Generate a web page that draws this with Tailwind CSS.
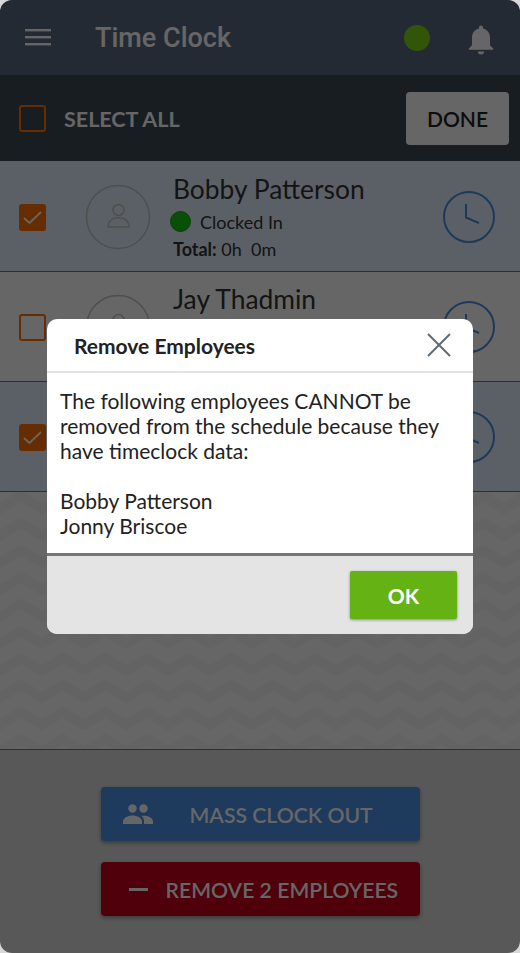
<!DOCTYPE html>
<html lang="en">
<head>
  <meta charset="UTF-8">
  <title>Time Clock</title>
  <script src="https://cdn.jsdelivr.net/npm/@tailwindcss/browser@4"></script>
</head>
<body class="bg-[#d8d8d8]">

  <div class="relative w-[520px] h-[953px] rounded-[12px] overflow-hidden flex flex-col bg-white font-['Lato',sans-serif] text-[#333]">

    <!-- Top bar -->
    <div class="h-[75px] shrink-0 bg-[#5a6980] flex items-center text-white">
      <svg class="ml-[25px] w-[26px] h-[18px]" viewBox="0 0 26 18" fill="#fff"><rect y="0" width="26" height="2.4"/><rect y="7" width="26" height="2.4"/><rect y="14" width="26" height="2.4"/></svg>
      <div class="ml-[44px] pt-[2px] font-['Roboto',sans-serif] font-medium text-[27px] leading-none">Time Clock</div>
      <div class="ml-auto w-[26px] h-[26px] rounded-full bg-[#7dd419]"></div>
      <svg class="ml-[37px] mr-[25px] mt-[5px] w-[28px] h-[32px]" viewBox="0 0 28 32" fill="#fff">
        <path d="M14 1.500c-1.200 0-2 .9-2 2v.9C7.600 5.400 5 9 5 13.400v7.800L1.800 24.600v1.200h24.400v-1.200L23 21.200v-7.800c0-4.400-2.600-8-7-9v-.9c0-1.100-.8-2-2-2z"/>
        <path d="M10.800 27.400h6.400c0 1.800-1.400 3.100-3.200 3.100s-3.200-1.300-3.200-3.100z"/>
      </svg>
    </div>

    <!-- Select all bar -->
    <div class="h-[86px] shrink-0 bg-[#3c4955] flex items-center pl-[19px] pr-[11px]">
      <div class="w-[27px] h-[27px] rounded-[3px] border-2 border-[#ff7000]"></div>
      <div class="ml-[18px] pt-[2px] text-white font-bold text-[21.500px]">SELECT ALL</div>
      <button class="ml-auto w-[103px] h-[53px] rounded-[4px] bg-white text-[#222] font-semibold text-[21px] pt-[1px]">DONE</button>
    </div>

    <!-- Employees -->
    <div class="h-[111px] shrink-0 pt-px bg-[#e4f0ff] border-b border-[#777] flex items-center relative">
      <div class="ml-[19px] mt-[1px] w-[27px] h-[27px] rounded-[3px] bg-[#ff7000] flex items-center justify-center">
        <svg class="w-[19px] h-[15px]" viewBox="0 0 19 15" fill="none" stroke="#fff" stroke-width="1.800"><path d="M1 8l5.500 5L18 2"/></svg>
      </div>
      <svg class="ml-[39px] w-[66px] h-[66px] shrink-0" viewBox="0 0 66 66" fill="none" stroke="#c4c4c4" stroke-width="1.500"><circle cx="33" cy="33" r="31.500"/><circle cx="33.500" cy="26" r="5.500"/><path d="M23 43c0-6 4.500-9.500 10.500-9.500S44 37 44 43z"/></svg>
      <div class="ml-[22px] pt-[1px] flex flex-col">
        <div class="text-[26.400px] leading-[36px]">Bobby Patterson</div>
        <div class="flex items-center h-[29px] text-[18px] -ml-[3px]">
          <span class="w-[21px] h-[21px] rounded-full bg-[#14c814] border border-[#0fa00f]"></span>
          <span class="ml-[9px] pt-[1px]">Clocked In</span>
        </div>
        <div class="text-[18px] leading-[27px]"><b>Total:</b> 0h&nbsp; 0m</div>
      </div>
      <svg class="ml-auto mr-[25px] w-[52px] h-[52px]" viewBox="0 0 52 52" fill="none" stroke="#4a90e2" stroke-width="2"><circle cx="26" cy="26" r="25"/><path d="M23 13v13.500L36 32"/></svg>
    </div>

    <!-- status lines of the other two rows sit behind the dialog, so they are left out -->
    <div class="h-[110px] shrink-0 bg-white border-b border-[#777] flex items-center relative">
      <div class="ml-[19px] mt-[1px] w-[27px] h-[27px] rounded-[3px] border-2 border-[#ff7000]"></div>
      <svg class="ml-[39px] w-[66px] h-[66px] shrink-0" viewBox="0 0 66 66" fill="none" stroke="#c4c4c4" stroke-width="1.500"><circle cx="33" cy="33" r="31.500"/><circle cx="33.500" cy="26" r="5.500"/><path d="M23 43c0-6 4.500-9.500 10.500-9.500S44 37 44 43z"/></svg>
      <div class="ml-[22px] pt-[1px] pb-[56px] flex flex-col">
        <div class="text-[26.400px] leading-[34px]">Jay Thadmin</div>
      </div>
      <svg class="ml-auto mr-[25px] w-[52px] h-[52px]" viewBox="0 0 52 52" fill="none" stroke="#4a90e2" stroke-width="2"><circle cx="26" cy="26" r="25"/><path d="M23 13v13.500L36 32"/></svg>
    </div>

    <div class="h-[110px] shrink-0 bg-[#e4f0ff] border-b border-[#777] flex items-center relative">
      <div class="ml-[19px] mt-[1px] w-[27px] h-[27px] rounded-[3px] bg-[#ff7000] flex items-center justify-center">
        <svg class="w-[19px] h-[15px]" viewBox="0 0 19 15" fill="none" stroke="#fff" stroke-width="1.800"><path d="M1 8l5.500 5L18 2"/></svg>
      </div>
      <svg class="ml-auto mr-[25px] w-[52px] h-[52px]" viewBox="0 0 52 52" fill="none" stroke="#4a90e2" stroke-width="2"><circle cx="26" cy="26" r="25"/><path d="M23 13v13.500L36 32"/></svg>
    </div>

    <!-- Empty list background with zigzag -->
    <div class="flex-1 bg-white border-b border-[#777] overflow-hidden">
      <svg class="w-full h-full" fill="none">
        <defs>
          <pattern id="zigzag" width="42" height="27" patternUnits="userSpaceOnUse">
            <path d="M-2 18L21 4L44 18" stroke="#f8f8f8" stroke-width="10"/>
            <path d="M-2 45L21 31L44 45" stroke="#f8f8f8" stroke-width="10"/>
          </pattern>
        </defs>
        <rect width="100%" height="100%" fill="url(#zigzag)"/>
      </svg>
    </div>

    <!-- Bottom actions -->
    <div class="h-[203px] shrink-0 bg-[#dcdcdc] flex flex-col items-center pt-[37px] gap-[21px] text-white font-semibold text-[21.200px]">
      <button class="relative w-[319px] h-[54px] rounded-[4px] bg-[#4b91e6] shadow-[0_2px_4px_rgba(0,0,0,0.35)] flex items-center">
        <svg class="absolute left-[22px] top-[17px] w-[30px] h-[20px]" viewBox="0 0 30 20" fill="#fff">
          <circle cx="9.500" cy="4.500" r="4.200"/><circle cx="20.500" cy="4.500" r="4.200"/>
          <path d="M0 20v-2.500c0-3.800 5-6 9.500-6s9.500 2.200 9.500 6V20z"/>
          <path d="M21 20v-3c0-2.200-1-3.800-2.600-5 .8-.2 1.500-.3 2.200-.3 4.300 0 9.400 2 9.400 5.800V20z"/>
        </svg>
        <span class="ml-[89px] pt-[3px]">MASS CLOCK OUT</span>
      </button>
      <button class="relative w-[319px] h-[54px] rounded-[4px] bg-[#c80019] shadow-[0_2px_4px_rgba(0,0,0,0.35)] flex items-center">
        <span class="absolute left-[28px] top-[26px] w-[19px] h-[2.500px] bg-white"></span>
        <span class="ml-[65px] pt-[3px]">REMOVE 2 EMPLOYEES</span>
      </button>
    </div>

    <!-- Dialog -->
    <div class="absolute inset-0 bg-black/60 flex items-center justify-center">
      <div class="w-[426px] h-[315px] rounded-[10px] overflow-hidden bg-white flex flex-col text-[#222]">
        <div class="h-[54px] shrink-0 border-b-2 border-[#e2e2e2] flex items-center pl-[27px] pr-[22px]">
          <div class="pt-[2px] font-bold text-[21px]">Remove Employees</div>
          <svg class="ml-auto w-[24px] h-[24px]" viewBox="0 0 24 24" fill="none" stroke="#5f6b76" stroke-width="2"><path d="M1 1l22 22M23 1L1 23"/></svg>
        </div>
        <div class="flex-1 pl-[13px] pr-[20px] pt-[15px] text-[21px] leading-[25px]">
          <p>The following employees CANNOT be removed from the schedule because they have timeclock data:</p>
          <p class="mt-[25px]">Bobby Patterson<br>Jonny Briscoe</p>
        </div>
        <div class="h-[81px] shrink-0 bg-[#e4e4e4] border-t-[3px] border-[#777] flex items-center justify-end pr-[16px]">
          <button class="w-[107px] h-[48px] rounded-[2px] bg-[#64b214] text-white font-bold text-[21px] pt-[2px] shadow-[0_1px_3px_rgba(0,0,0,0.4)]">OK</button>
        </div>
      </div>
    </div>

  </div>

</body>
</html>
